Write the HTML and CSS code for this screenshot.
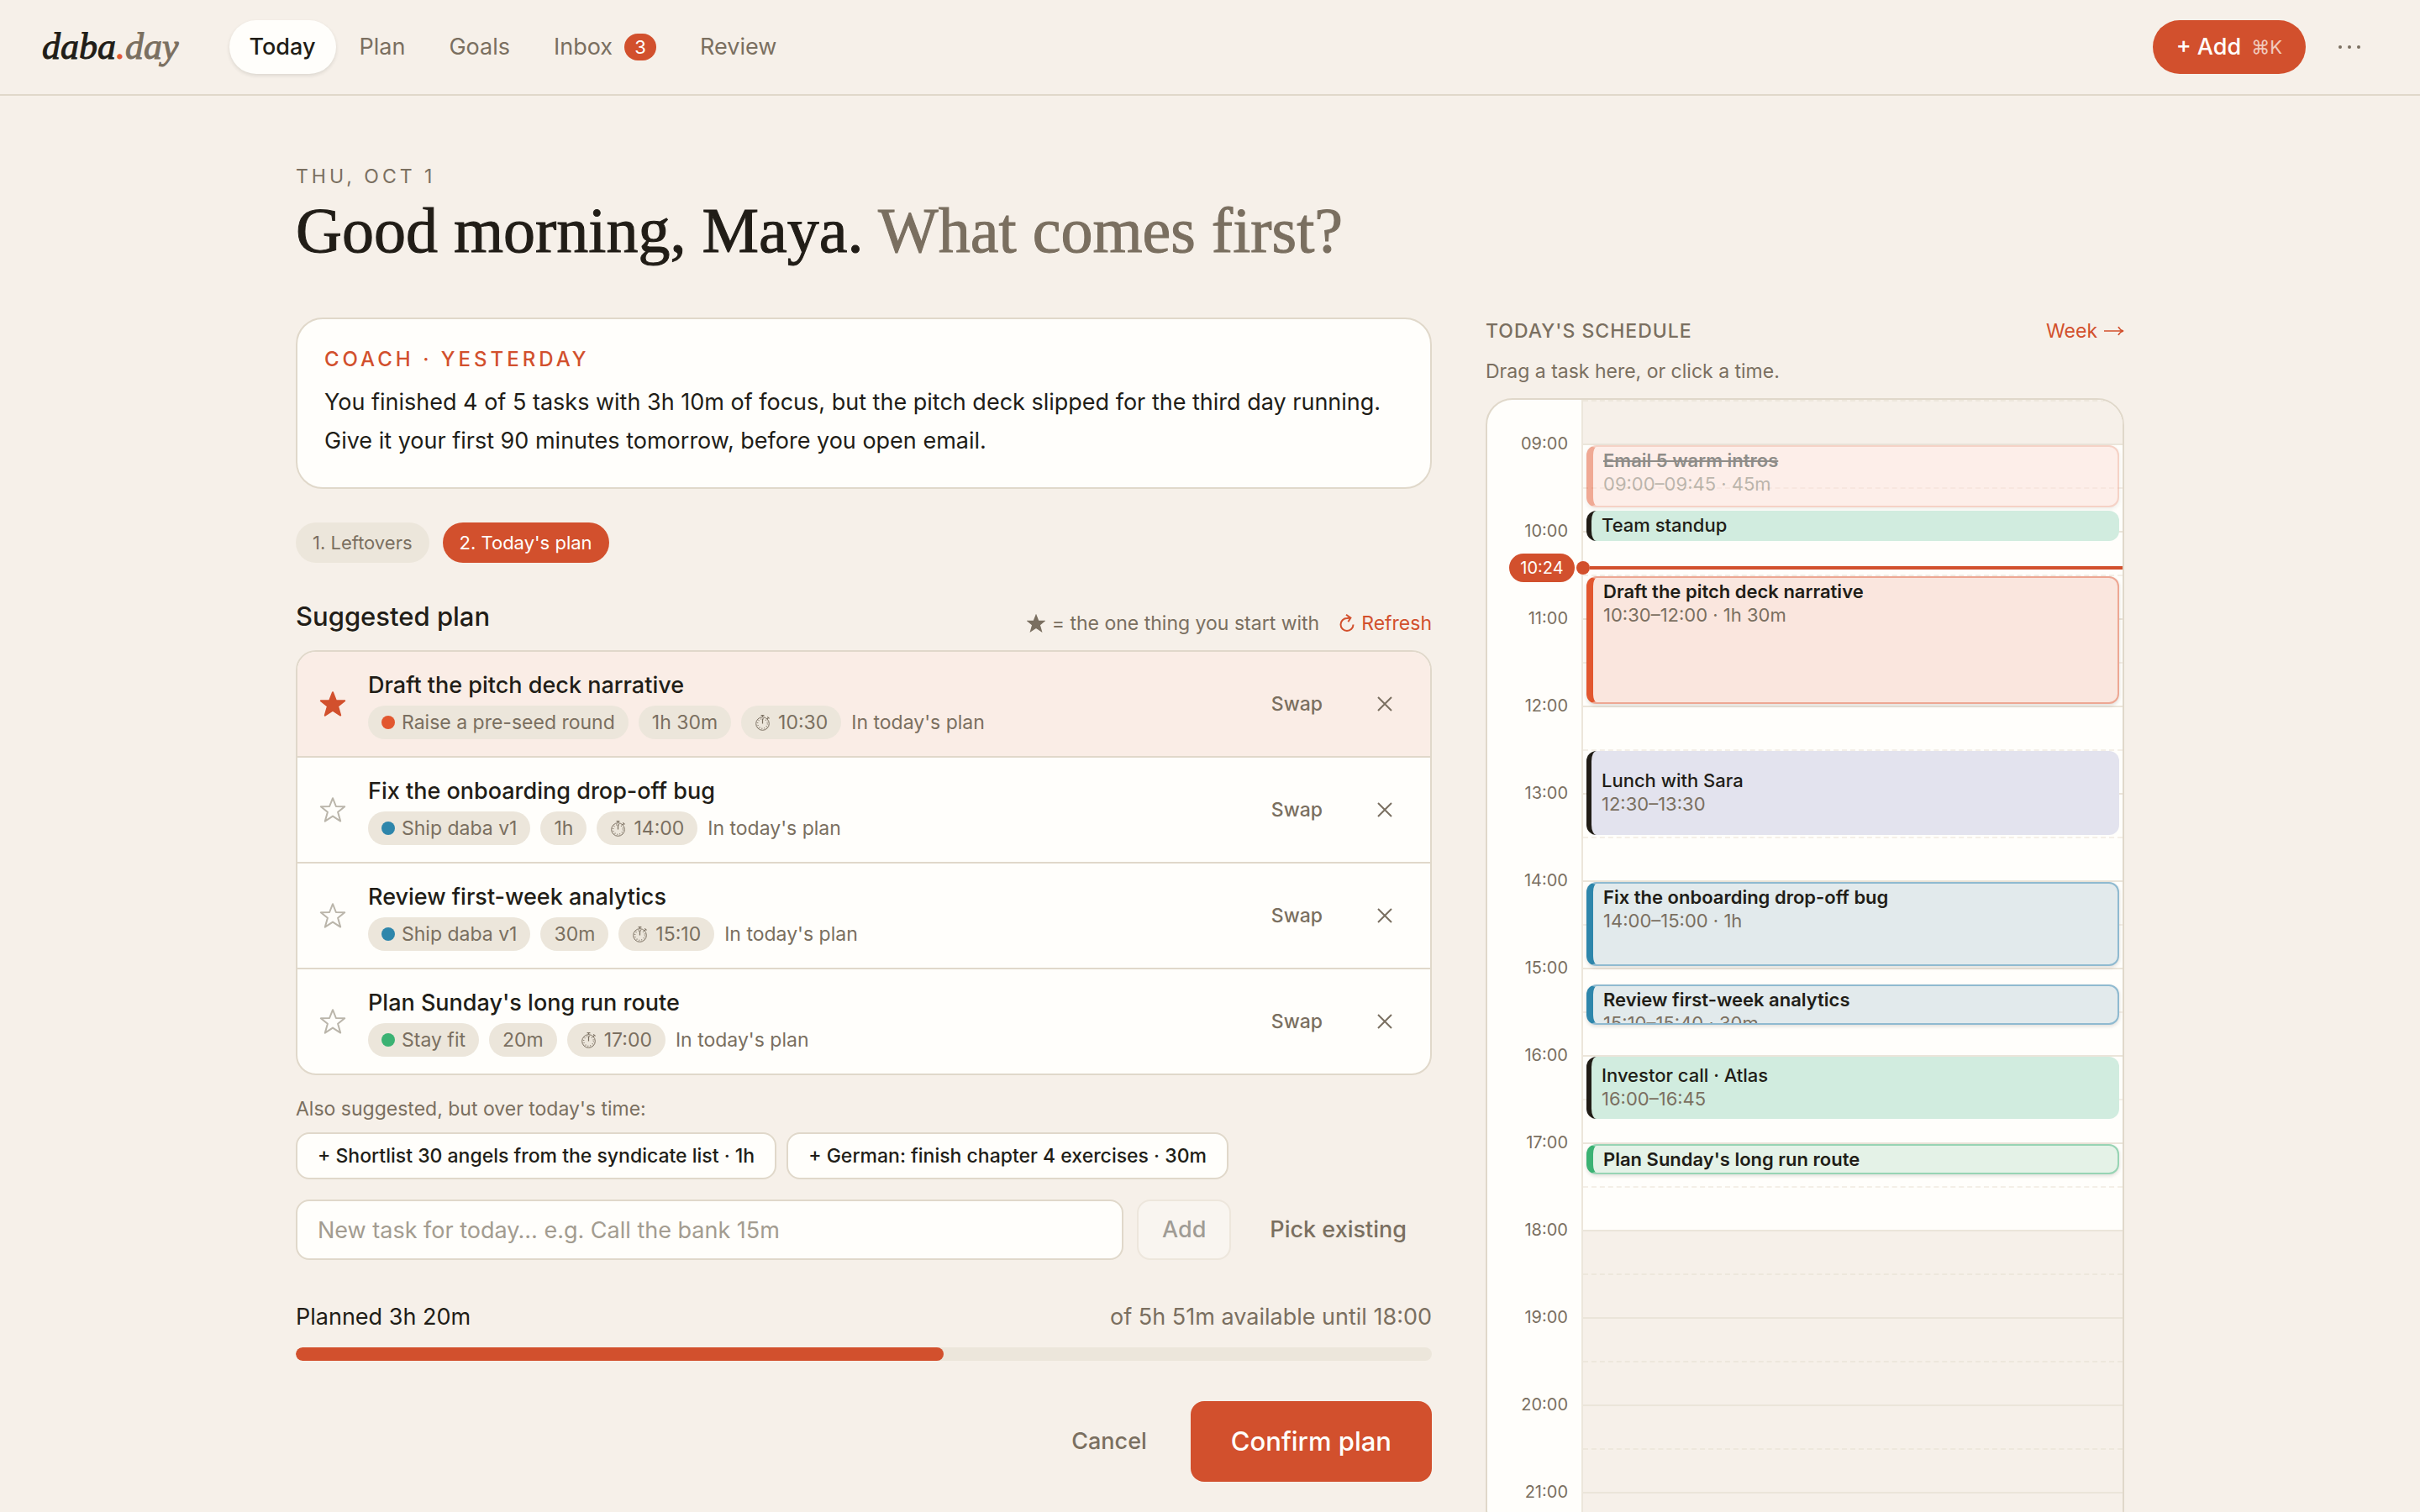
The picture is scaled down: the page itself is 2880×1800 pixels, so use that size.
FILE: index.html
```html
<!DOCTYPE html>
<html lang="en">
<head>
<meta charset="utf-8">
<meta name="viewport" content="width=device-width, initial-scale=1">
<title>daba.day – Today</title>
<link rel="stylesheet" href="styles.css">
</head>
<body>
<svg class="sprite" aria-hidden="true">
  <symbol id="star" viewBox="0 0 32 32"><path d="M16 2.2 L19.9 12 L30.2 12.3 L22.1 18.8 L25.2 29.6 L16 23.6 L6.8 29.6 L9.9 18.8 L1.8 12.3 L12.1 12 Z"/></symbol>
  <symbol id="clock" viewBox="0 0 20 22"><circle cx="9.5" cy="12.5" r="7.8" stroke-width="1"/><path d="M9.5 12.5V6.5" stroke-width="1.2"/><path d="M7.6 2.6H11.4M9.5 2.6V4.5M15.2 4.4L17.6 6.4M15 7L16.4 5.4" stroke-width="1.1"/><circle cx="9.5" cy="12.5" r="5.8" stroke-width="1.2" stroke-dasharray="0.9 2.137"/></symbol>
  <symbol id="cross" viewBox="0 0 20 20"><path d="M2 2L18 18M18 2L2 18"/></symbol>
</svg>

<header class="topbar">
  <a class="logo" href="#">daba<span class="logo-dot">.</span><span class="logo-day">day</span></a>
  <nav class="nav" aria-label="Main">
    <a class="nav-link active" href="#" aria-current="page">Today</a>
    <a class="nav-link" href="#">Plan</a>
    <a class="nav-link" href="#">Goals</a>
    <a class="nav-link" href="#">Inbox <span class="badge">3</span></a>
    <a class="nav-link" href="#">Review</a>
  </nav>
  <button class="add-btn" type="button">+ Add <span class="kbd">⌘K</span></button>
  <button class="more-btn" type="button" aria-label="More">
    <svg viewBox="0 0 28 8" width="28" height="8"><circle cx="3" cy="4" r="2"/><circle cx="14" cy="4" r="2"/><circle cx="25" cy="4" r="2"/></svg>
  </button>
</header>

<main class="page">
  <p class="date">THU, OCT 1</p>
  <h1 class="greeting">Good morning, Maya. <span>What comes first?</span></h1>

  <div class="columns">
    <section class="planner">
      <article class="coach">
        <h2 class="coach-label">COACH · YESTERDAY</h2>
        <p>You finished 4 of 5 tasks with 3h 10m of focus, but the pitch deck slipped for the third day running. Give it your first 90 minutes tomorrow, before you open email.</p>
      </article>

      <div class="steps">
        <button class="step" type="button">1. Leftovers</button>
        <button class="step current" type="button" aria-current="step">2. Today's plan</button>
      </div>

      <div class="plan-head">
        <h2>Suggested plan</h2>
        <p class="hint"><svg class="hint-star" aria-hidden="true"><use href="#star"/></svg> = the one thing you start with</p>
        <button class="refresh" type="button"><svg viewBox="0 0 18 22" width="18" height="22" aria-hidden="true"><path d="M16.5 12.5A7.5 7.5 0 1 1 9 5L13 4.6M8 .8L13.4 4.6L10.4 9.2"/></svg>Refresh</button>
      </div>

      <ul class="tasks">
        <li class="task first">
          <button class="star on" type="button" aria-label="Starred"><svg><use href="#star"/></svg></button>
          <div class="task-body">
            <h3>Draft the pitch deck narrative</h3>
            <div class="meta"><span class="chip"><i class="dot orange"></i>Raise a pre-seed round</span><span class="chip">1h 30m</span><span class="chip"><svg class="clock"><use href="#clock"/></svg>10:30</span><span>In today's plan</span></div>
          </div>
          <button class="swap" type="button">Swap</button>
          <button class="remove" type="button" aria-label="Remove"><svg><use href="#cross"/></svg></button>
        </li>
        <li class="task">
          <button class="star" type="button" aria-label="Star"><svg><use href="#star"/></svg></button>
          <div class="task-body">
            <h3>Fix the onboarding drop-off bug</h3>
            <div class="meta"><span class="chip"><i class="dot blue"></i>Ship daba v1</span><span class="chip">1h</span><span class="chip"><svg class="clock"><use href="#clock"/></svg>14:00</span><span>In today's plan</span></div>
          </div>
          <button class="swap" type="button">Swap</button>
          <button class="remove" type="button" aria-label="Remove"><svg><use href="#cross"/></svg></button>
        </li>
        <li class="task">
          <button class="star" type="button" aria-label="Star"><svg><use href="#star"/></svg></button>
          <div class="task-body">
            <h3>Review first-week analytics</h3>
            <div class="meta"><span class="chip"><i class="dot blue"></i>Ship daba v1</span><span class="chip">30m</span><span class="chip"><svg class="clock"><use href="#clock"/></svg>15:10</span><span>In today's plan</span></div>
          </div>
          <button class="swap" type="button">Swap</button>
          <button class="remove" type="button" aria-label="Remove"><svg><use href="#cross"/></svg></button>
        </li>
        <li class="task">
          <button class="star" type="button" aria-label="Star"><svg><use href="#star"/></svg></button>
          <div class="task-body">
            <h3>Plan Sunday's long run route</h3>
            <div class="meta"><span class="chip"><i class="dot green"></i>Stay fit</span><span class="chip">20m</span><span class="chip"><svg class="clock"><use href="#clock"/></svg>17:00</span><span>In today's plan</span></div>
          </div>
          <button class="swap" type="button">Swap</button>
          <button class="remove" type="button" aria-label="Remove"><svg><use href="#cross"/></svg></button>
        </li>
      </ul>

      <p class="also">Also suggested, but over today's time:</p>
      <div class="extras">
        <button class="extra" type="button">+ Shortlist 30 angels from the syndicate list · 1h</button>
        <button class="extra" type="button">+ German: finish chapter 4 exercises · 30m</button>
      </div>

      <form class="new-task">
        <input type="text" aria-label="New task for today" placeholder="New task for today… e.g. Call the bank 15m">
        <button class="add-task" type="submit" disabled>Add</button>
        <button class="pick" type="button">Pick existing</button>
      </form>

      <div class="budget">
        <span>Planned 3h 20m</span>
        <span class="budget-total">of 5h 51m available until 18:00</span>
      </div>
      <div class="track" role="progressbar" aria-label="Planned time" aria-valuenow="57" aria-valuemin="0" aria-valuemax="100"><div class="fill" style="width:57%"></div></div>

      <div class="actions">
        <button class="cancel" type="button">Cancel</button>
        <button class="confirm" type="button">Confirm plan</button>
      </div>
    </section>

    <aside class="schedule">
      <div class="schedule-head">
        <h2>TODAY'S SCHEDULE</h2>
        <a href="#">Week <svg viewBox="0 0 24 16" width="24" height="16" aria-hidden="true"><path d="M0 8H22.5M17 3Q19 7 23 8Q19 9 17 13"/></svg></a>
      </div>
      <p class="schedule-hint">Drag a task here, or click a time.</p>

      <div class="calendar">
        <div class="gutter">
          <span>09:00</span><span>10:00</span><span>11:00</span><span>12:00</span><span>13:00</span><span>14:00</span><span>15:00</span><span>16:00</span><span>17:00</span><span>18:00</span><span>19:00</span><span>20:00</span><span>21:00</span>
        </div>
        <div class="slots">
          <div class="half off"></div>
          <div class="hour"></div><div class="half"></div>
          <div class="hour"></div><div class="half"></div>
          <div class="hour"></div><div class="half"></div>
          <div class="hour"></div><div class="half"></div>
          <div class="hour"></div><div class="half"></div>
          <div class="hour"></div><div class="half"></div>
          <div class="hour"></div><div class="half"></div>
          <div class="hour"></div><div class="half"></div>
          <div class="hour"></div><div class="half"></div>
          <div class="hour off"></div><div class="half off"></div>
          <div class="hour off"></div><div class="half off"></div>
          <div class="hour off"></div><div class="half off"></div>
          <div class="hour off"></div>

          <div class="event own orange done" style="top:54px;height:74px"><strong>Email 5 warm intros</strong><span>09:00–09:45 · 45m</span></div>
          <div class="event meeting mint" style="top:132px;height:36px"><strong>Team standup</strong></div>
          <div class="event own orange" style="top:210px;height:152px"><strong>Draft the pitch deck narrative</strong><span>10:30–12:00 · 1h 30m</span></div>
          <div class="event meeting lilac" style="top:418px;height:100px"><strong>Lunch with Sara</strong><span>12:30–13:30</span></div>
          <div class="event own blue" style="top:574px;height:100px"><strong>Fix the onboarding drop-off bug</strong><span>14:00–15:00 · 1h</span></div>
          <div class="event own blue" style="top:696px;height:48px"><strong>Review first-week analytics</strong><span>15:10–15:40 · 30m</span></div>
          <div class="event meeting mint" style="top:782px;height:74px"><strong>Investor call · Atlas</strong><span>16:00–16:45</span></div>
          <div class="event own green" style="top:886px;height:36px"><strong>Plan Sunday's long run route</strong></div>
        </div>
        <div class="now" style="top:182px"><span class="now-time">10:24</span><i class="now-dot"></i><i class="now-line"></i></div>
      </div>
    </aside>
  </div>
</main>
</body>
</html>
```
FILE: styles.css
```css
:root {
  --bg: #f6f0e9;
  --card: #fffefb;
  --ink: #211d17;
  --muted: #7a6f60;
  --accent: #d2502d;
  --line: #e0d8ca;
  --soft: #ece6db;
  --sans: Inter, "Liberation Sans", sans-serif;
  --serif: "Liberation Serif", serif;
}

* { box-sizing: border-box; margin: 0; padding: 0; }

html { scrollbar-width: none; }

body {
  background: var(--bg);
  color: var(--ink);
  font: 400 27px/40px var(--sans);
}

button, input {
  border: 0;
  background: none;
  color: inherit;
  font: inherit;
}

button { font-weight: 500; white-space: nowrap; cursor: pointer; }
a { color: inherit; text-decoration: none; }
ul { list-style: none; }
svg { fill: none; stroke: currentColor; }
.sprite { display: none; }

/* Top bar */
.topbar {
  display: flex;
  align-items: center;
  padding: 24px 48px 24px 50px;
  border-bottom: 2px solid var(--line);
}

.logo {
  margin-right: 60px;
  font: italic 44px/64px var(--serif);
  -webkit-text-stroke: 1px;
}
.logo-dot { color: #e2572f; }
.logo-day { color: var(--muted); }

.nav { display: flex; gap: 4px; flex: 1; }
.nav-link {
  display: flex;
  align-items: center;
  gap: 14px;
  height: 64px;
  padding: 0 24px;
  border-radius: 32px;
  color: var(--muted);
}
.nav-link.active {
  background: var(--card);
  color: var(--ink);
  font-weight: 500;
  box-shadow: 0 2px 4px rgba(33, 29, 23, .12);
}
.badge {
  min-width: 38px;
  padding: 0 12px;
  border-radius: 16px;
  background: var(--accent);
  color: var(--card);
  font-size: 22px;
  line-height: 32px;
  text-align: center;
}

.add-btn {
  display: flex;
  align-items: center;
  gap: 12px;
  height: 64px;
  padding: 0 28px;
  border-radius: 32px;
  background: var(--accent);
  color: var(--card);
}
.kbd { font-size: 22px; font-weight: 400; opacity: .7; }
.more-btn {
  display: flex;
  align-items: center;
  justify-content: center;
  width: 72px;
  height: 64px;
  margin-left: 16px;
  color: var(--muted);
}
.more-btn svg { fill: currentColor; stroke: none; }

/* Page */
.page {
  max-width: 2240px;
  margin: 0 auto;
  padding: 80px 32px 0;
}
.date {
  color: var(--muted);
  font-size: 23px;
  line-height: 32px;
  letter-spacing: 4px;
}
.greeting {
  margin: 6px 0 62px;
  font: 400 76px/84px var(--serif);
  -webkit-text-stroke: 1px;
}
.greeting span { color: var(--muted); }

.columns {
  display: grid;
  grid-template-columns: minmax(0, 1fr) 760px;
  gap: 64px;
  align-items: start;
}

/* Coach note */
.coach {
  padding: 32px;
  border: 2px solid var(--line);
  border-radius: 32px;
  background: var(--card);
  line-height: 46px;
}
.coach-label {
  margin-bottom: 12px;
  color: var(--accent);
  font-size: 24px;
  font-weight: 500;
  line-height: 32px;
  letter-spacing: 4px;
}

/* Steps */
.steps { display: flex; gap: 16px; margin-top: 40px; }
.step {
  height: 48px;
  padding: 0 20px;
  border-radius: 24px;
  background: var(--soft);
  color: var(--muted);
  font-size: 22px;
  font-weight: 400;
}
.step.current { background: var(--accent); color: var(--card); }

/* Suggested plan */
.plan-head {
  display: flex;
  align-items: flex-end;
  gap: 24px;
  margin: 40px 0 16px;
  color: var(--muted);
  font-size: 23px;
  line-height: 32px;
}
.plan-head h2 {
  flex: 1;
  color: var(--ink);
  font-size: 31px;
  font-weight: 500;
  line-height: 48px;
}
.hint { display: flex; align-items: center; gap: 8px; }
.hint-star { width: 22px; height: 22px; fill: currentColor; stroke-width: 2; }
.refresh {
  display: flex;
  align-items: center;
  gap: 8px;
  color: var(--accent);
  font-weight: 400;
}
.refresh svg { stroke-width: 2; }

.tasks {
  overflow: hidden;
  border: 2px solid var(--line);
  border-radius: 24px;
  background: var(--card);
}
.task {
  display: flex;
  align-items: center;
  padding: 20px 20px 20px 0;
}
.task + .task { border-top: 2px solid var(--line); }
.task.first { background: #faede6; }
.task-body { flex: 1; }
.task h3 { font-size: 27px; font-weight: 500; line-height: 40px; }

.star {
  display: flex;
  justify-content: center;
  width: 84px;
  color: #bab5aa;
}
.star svg { width: 32px; height: 32px; stroke-width: 2; stroke-linejoin: round; }
.star.on { color: var(--accent); }
.star.on svg { fill: currentColor; }

.meta {
  display: flex;
  align-items: center;
  gap: 12px;
  margin-top: 4px;
  color: var(--muted);
  font-size: 23px;
}
.chip {
  display: flex;
  align-items: center;
  gap: 8px;
  height: 40px;
  padding: 0 16px;
  border-radius: 20px;
  background: var(--soft);
}
.dot { width: 16px; height: 16px; border-radius: 50%; }
.dot.orange { background: #e2572f; }
.dot.blue { background: #2e86ab; }
.dot.green { background: #3bb273; }
.clock { width: 20px; height: 22px; }

.swap {
  height: 56px;
  margin-right: 16px;
  padding: 0 24px;
  color: var(--muted);
  font-size: 23px;
}
.remove {
  display: flex;
  align-items: center;
  justify-content: center;
  width: 68px;
  height: 56px;
  color: var(--muted);
}
.remove svg { width: 20px; height: 20px; stroke-width: 2; }

/* Extra suggestions */
.also {
  margin-top: 24px;
  color: var(--muted);
  font-size: 23px;
  line-height: 32px;
}
.extras { display: flex; gap: 12px; margin-top: 12px; }
.extra {
  height: 56px;
  padding: 0 24px;
  border: 2px solid var(--line);
  border-radius: 16px;
  background: var(--card);
  font-size: 23px;
}

/* New task */
.new-task { display: flex; gap: 16px; margin-top: 24px; }
.new-task input {
  flex: 1;
  min-width: 0;
  height: 72px;
  padding: 0 24px;
  border: 2px solid var(--line);
  border-radius: 16px;
  background: var(--card);
}
.new-task input::placeholder { color: #a39c90; opacity: 1; }
.add-task {
  padding: 0 28px;
  border: 2px solid var(--line);
  border-radius: 16px;
  background: var(--card);
  color: var(--ink);
  opacity: .4;
}
.pick { padding: 0 30px; color: var(--muted); }

/* Time budget */
.budget { display: flex; justify-content: space-between; margin-top: 48px; }
.budget-total { color: var(--muted); }
.track {
  overflow: hidden;
  height: 16px;
  margin-top: 16px;
  border-radius: 8px;
  background: var(--soft);
}
.fill { height: 100%; border-radius: 8px; background: var(--accent); }

.actions {
  display: flex;
  justify-content: flex-end;
  gap: 24px;
  margin-top: 48px;
}
.cancel { padding: 0 28px; color: var(--muted); }
.confirm {
  height: 96px;
  padding: 0 48px;
  border-radius: 16px;
  background: var(--accent);
  color: var(--card);
  font-size: 31px;
}

/* Schedule */
.schedule {
  color: var(--muted);
  font-size: 23px;
  line-height: 32px;
}
.schedule-head { display: flex; justify-content: space-between; }
.schedule-head h2 { font-size: 23px; font-weight: 500; letter-spacing: 1px; }
.schedule-head a {
  display: flex;
  align-items: center;
  gap: 8px;
  color: var(--accent);
}
.schedule-head svg { stroke-width: 1.6; }
.schedule-hint { margin: 16px 0; }

.calendar {
  position: relative;
  display: flex;
  overflow: hidden;
  border: 2px solid var(--line);
  border-radius: 32px;
  background: var(--card);
}
.gutter {
  display: flex;
  flex-direction: column;
  width: 112px;
  padding-right: 16px;
  font-size: 20px;
  line-height: 104px;
  text-align: right;
}
.slots {
  position: relative;
  flex: 1;
  border-left: 2px solid var(--soft);
}
.hour, .half { height: 52px; border-top: 2px solid #ebe5da; }
.half { border-top: 2px dashed #f4efe7; }
.off { background: var(--bg); }
.half.off { border-top-color: #ede7dc; }

.event {
  position: absolute;
  left: 4px;
  right: 4px;
  display: flex;
  flex-direction: column;
  overflow: hidden;
  padding: 0 12px;
  border-radius: 12px;
  font-size: 22px;
  line-height: 28px;
}
.event strong { color: var(--ink); }
.own {
  padding-top: 2px;
  border: 2px solid;
  border-left-width: 8px;
  box-shadow: 0 2px 4px rgba(33, 29, 23, .14);
}
.own strong { font-weight: 600; }
.own.orange { background: #fae6de; border-color: #eda793; border-left-color: #e2572f; }
.own.blue { background: #e2eaec; border-color: #8fbad0; border-left-color: #2e86ab; }
.own.green { background: #e4f2e7; border-color: #97d4b4; border-left-color: #3bb273; }
.own.done { background: #fddfd8; opacity: .5; }
.done strong { text-decoration: line-through; }
.meeting { justify-content: center; padding-bottom: 2px; border-left: 6px solid var(--ink); }
.meeting strong { font-weight: 500; }
.mint { background: #d1ecdf; }
.lilac { background: #e3e3ee; }

.now {
  position: absolute;
  left: 0;
  right: 0;
  display: flex;
  align-items: center;
  height: 36px;
}
.now-time {
  min-width: 78px;
  margin-left: 26px;
  border-radius: 17px;
  background: var(--accent);
  color: var(--card);
  font-size: 20px;
  line-height: 34px;
  text-align: center;
}
.now-dot {
  width: 16px;
  height: 16px;
  margin-left: 2px;
  border-radius: 50%;
  background: var(--accent);
}
.now-line { flex: 1; height: 4px; background: var(--accent); }
```
